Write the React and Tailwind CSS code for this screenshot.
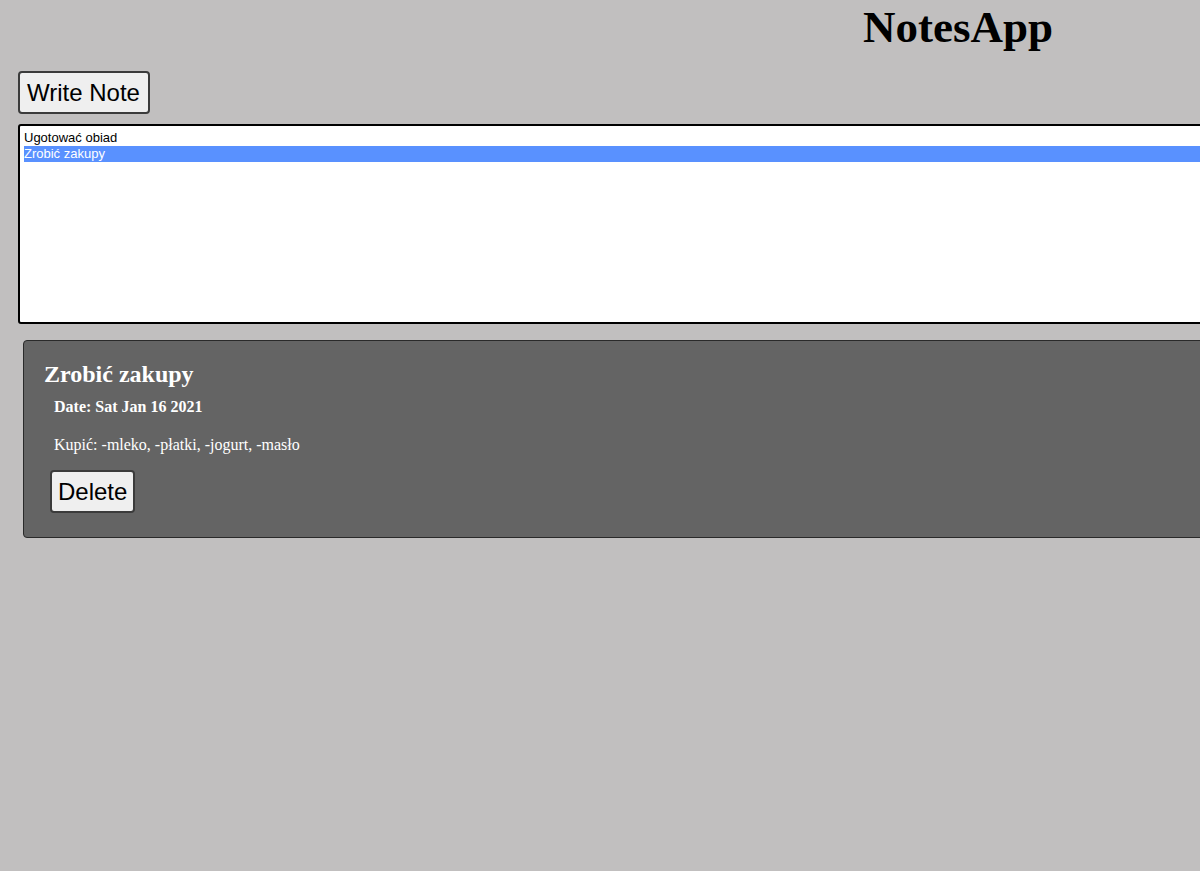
export default function App() {
  const notes = [
    { title: 'Ugotować obiad' },
    { title: 'Zrobić zakupy' },
  ];
  const selected = 1;

  return (
    <div className="h-screen w-screen overflow-hidden bg-[#c1bfbf]">
      <div className="w-[1916px]">
        <h1 className="h-[52px] pt-[1px] text-center text-[45px] font-bold leading-[52px] text-black [font-family:'Liberation_Serif',serif]">
          NotesApp
        </h1>
        <div className="pl-[18px] pt-[19px]">
          <button className="h-[43px] rounded-[4px] border-2 border-[#3b3b3b] bg-[#efefef] pl-[7px] pr-[8px] text-[24px] leading-none text-black [font-family:'Liberation_Sans',sans-serif]">
            Write Note
          </button>
        </div>
        <div className="mt-[10px] ml-[18px] mr-[18px] h-[200px] rounded-[3px] border-2 border-black bg-white pt-[4px] pl-[4px] [font-family:'Liberation_Sans',sans-serif]">
          {notes.map((n, i) => (
            <div
              key={n.title}
              className={
                i === selected
                  ? 'h-[16px] bg-[#5991ff] text-[13px] leading-[16px] text-white'
                  : 'h-[16px] text-[13px] leading-[16px] text-black'
              }
            >
              {n.title}
            </div>
          ))}
        </div>
        <div className="mt-[16px] ml-[23px] mr-[23px] h-[198px] rounded-[4px] border border-[#2a2a2a] bg-[#646464] pl-[20px] pt-[19px] text-white [font-family:'Liberation_Serif',serif]">
          <h2 className="text-[24px] font-bold leading-[28px]">Zrobić zakupy</h2>
          <div className="mt-[9px] pl-[10px] text-[16px] font-bold leading-[19px]">Date: Sat Jan 16 2021</div>
          <p className="mt-[19px] pl-[10px] text-[16px] leading-[19px]">Kupić: -mleko, -płatki, -jogurt, -masło</p>
          <div className="mt-[16px] pl-[6px]">
            <button className="h-[43px] rounded-[4px] border-2 border-[#3b3b3b] bg-[#efefef] px-[6px] text-[24px] leading-none text-black [font-family:'Liberation_Sans',sans-serif]">
              Delete
            </button>
          </div>
        </div>
      </div>
    </div>
  );
}
